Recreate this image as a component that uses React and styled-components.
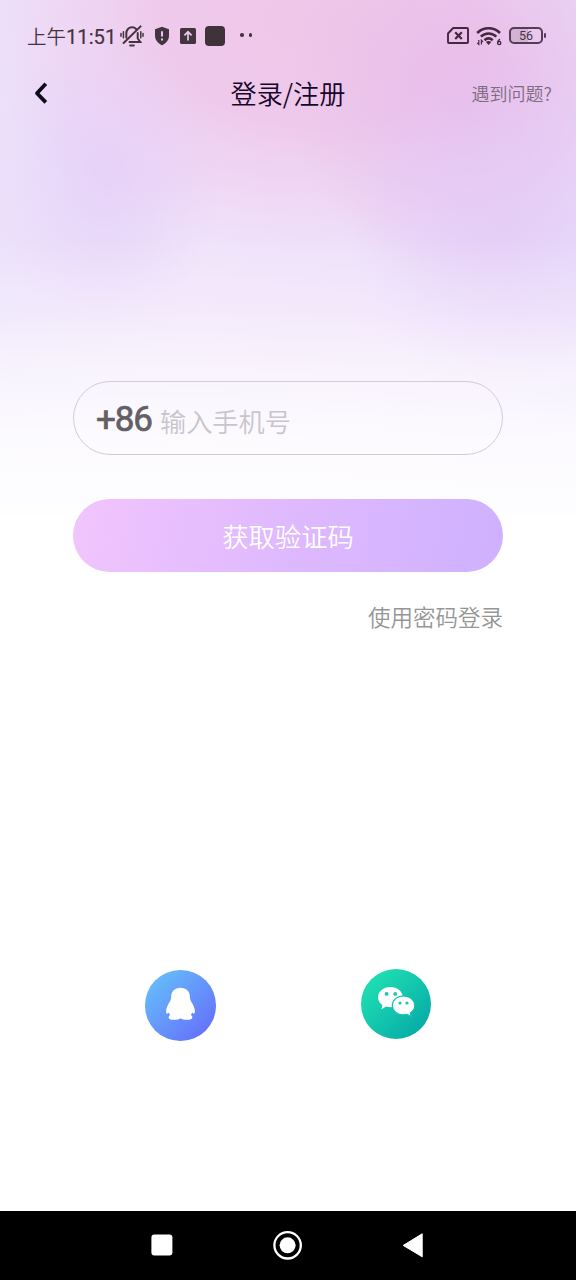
import React from 'react';
import styled, { createGlobalStyle } from 'styled-components';

const GlobalStyle = createGlobalStyle`
  * {
    box-sizing: border-box;
  }
  body {
    margin: 0;
    background: white;
    font-family: 'Noto Sans CJK SC', sans-serif;
    font-weight: 350;
  }
  svg {
    display: block;
    flex: none;
  }
`

const MutedBell = () => (
  <svg width='24' height='22' viewBox='0 0 24 22' fill='none' stroke='#44343f' strokeWidth='2' strokeLinecap='round'>
    <path d='M6.300 12.500V8.500C6.300 4.700 8.800 2.300 12 2.300c1.700 0 3.100.6 4.100 1.700M17.700 8v5.500l2.600 3.500H9.500M3.600 18 20.600 1.400' />
    <path d='M10.200 20.400h3.600' />
    <path d='M3.400 6.800v6M1 8.600v2.600M20.800 6.800v6M23 8.600v2.600' strokeWidth='1.500' />
  </svg>
)

const Shield = () => (
  <svg width='16' height='20' viewBox='0 0 16 20'>
    <path d='M8 .8 15 3.300v6.200c0 4.600-2.800 7.800-7 9.700-4.200-1.900-7-5.100-7-9.700V3.300z' fill='#44343f' />
    <path d='M8 5.200v5.400M8 12.600v2' stroke='#eac9ef' strokeWidth='2' />
  </svg>
)

const Upload = () => (
  <svg width='16' height='16' viewBox='0 0 16 16'>
    <rect width='16' height='16' rx='1.500' fill='#44343f' />
    <path d='M8 12.600V4M4.400 7.400 8 3.800l3.600 3.600' fill='none' stroke='#eac9ef' strokeWidth='1.700' />
  </svg>
)

const NoSim = () => (
  <svg width='22' height='17' viewBox='0 0 22 17' fill='none' stroke='#44283f' strokeWidth='1.900'>
    <path d='M6.200 1H20a1 1 0 0 1 1 1v13a1 1 0 0 1-1 1H2a1 1 0 0 1-1-1V6.500z' strokeLinejoin='round' />
    <path d='m8.200 5.200 6.600 6.800M14.800 5.200l-6.600 6.800' strokeWidth='2.200' />
  </svg>
)

const Wifi = () => (
  <svg width='26' height='20' viewBox='0 0 26 20' fill='none' stroke='#44283f' strokeWidth='2.600'>
    <path d='M1.200 7C7.600.7 17.600.7 24 7M4.900 10.700c4.300-4.300 11.100-4.300 15.400 0M8.500 14.200c2.500-2.300 5.700-2.300 8.200 0' />
    <path d='m9.900 16 2.700 3 2.700-3c-1.600-1.300-3.800-1.300-5.400 0z' fill='#44283f' stroke='none' />
    <path d='M2.800 14v4.400L1.200 16.800M5.400 18.600v-4.400L7 15.800' strokeWidth='1.200' />
    <path d='M24 13.200c-1.400.7-2.300 2-2.300 3.600' strokeWidth='1.400' />
    <circle cx='23.200' cy='17' r='1.600' strokeWidth='1.400' />
  </svg>
)

const QQ = () => (
  <svg width='30' height='34' viewBox='0 0 30 34' fill='white'>
    <path d='M15.500.8C9.800.8 6.300 4.600 6.100 10.200c0 1.700-.5 3-1.500 4.700C2.600 18 1.100 21.200 1.100 24.200c0 1.700.5 2.600 1.100 2.500.6-.1 1.100-.6 1.600-1.300.3 1 .7 1.800 1.300 2.500-1 .6-1.500 1.600-1.500 2.600 0 1.700 2 2.300 5.400 2.300 2.800 0 5.200-.5 6.500-1.500 1.300 1 3.700 1.500 6.500 1.500 3.400 0 5.400-.6 5.400-2.300 0-1-.5-2-1.500-2.600.6-.7 1-1.500 1.300-2.500.5.7 1 1.200 1.600 1.300.6.1 1.100-.8 1.100-2.500 0-3-1.500-6.200-3.500-9.300-1-1.700-1.500-3-1.500-4.700C25.100 4.600 21.200.8 15.500.8z' />
  </svg>
)

const WeChat = () => (
  <svg width='38' height='32' viewBox='0 0 38 32' fill='white'>
    <path d='M13.400 1C6.500 1 1 5.500 1 11.200c0 3.200 1.700 6 4.400 7.900L4.400 23.200l4.800-2.600c1.400.4 2.700.6 4.200.6 7 0 12.400-4.400 12.400-10S20.400 1 13.400 1z' />
    <path d='M26.500 9.900c-6.200 0-11.200 4.200-11.200 9.500s5 9.500 11.200 9.500c1.300 0 2.500-.2 3.600-.5l4.300 2.400-1.100-3.800c2.700-1.800 4.400-4.500 4.400-7.600 0-5.300-5-9.500-11.200-9.500z' stroke='#14c4ac' strokeWidth='1.200' />
    <g fill='#18c9ad'>
      <circle cx='9.600' cy='7.900' r='1.900' />
      <circle cx='18.200' cy='7.900' r='1.900' />
      <circle cx='23' cy='17' r='1.600' />
      <circle cx='30' cy='17' r='1.600' />
    </g>
  </svg>
)

const App = () => {
  return (
    <Page>
      <GlobalStyle />
      <StatusBar>
        <Time>上午<b>11:51</b></Time>
        <StatusIcons>
          <MutedBell />
          <Shield />
          <Upload />
          <AppBadge />
          <Dots><i /><i /></Dots>
        </StatusIcons>
        <Signals>
          <NoSim />
          <Wifi />
          <Battery><span>56</span></Battery>
        </Signals>
      </StatusBar>
      <Header>
        <svg width='16' height='24' viewBox='0 0 16 24' fill='none' stroke='#100c18' strokeWidth='3.800'>
          <path d='M13.800 2.800 5 12.200l8.800 9.200' strokeLinecap='butt' strokeLinejoin='round' />
        </svg>
        <Title>登录/注册</Title>
        <Help>遇到问题?</Help>
      </Header>
      <Form>
        <PhoneField>
          <Prefix>+86</Prefix>
          <Placeholder>输入手机号</Placeholder>
        </PhoneField>
        <Submit>获取验证码</Submit>
        <PasswordLink>使用密码登录</PasswordLink>
      </Form>
      <Socials>
        <Social $from='#65bdfb' $to='#6570fb' $drop='1.5px'><QQ /></Social>
        <Social $from='#20e1b2' $to='#06aaa8' $drop='0'><WeChat /></Social>
      </Socials>
      <NavBar>
        <svg width='22' height='22' viewBox='0 0 22 22'>
          <rect x='.4' y='.6' width='21' height='21' rx='3' fill='white' />
        </svg>
        <svg width='30' height='30' viewBox='0 0 30 30'>
          <circle cx='14.600' cy='15.300' r='13.200' fill='none' stroke='white' strokeWidth='2.300' />
          <circle cx='14.600' cy='15.300' r='8' fill='white' />
        </svg>
        <svg width='22' height='26' viewBox='0 0 22 26'>
          <path d='M20.200 1.800v23L1.200 13.400z' fill='white' stroke='white' strokeLinejoin='round' />
        </svg>
      </NavBar>
    </Page>
  )
}

const Page = styled.main`
  width: 576px;
  height: 1280px;
  display: flex;
  flex-direction: column;
  overflow: hidden;
  background:
    linear-gradient(to bottom, rgba(255, 255, 255, 0) 240px, rgba(255, 255, 255, 0.25) 310px, rgba(255, 255, 255, 0.6) 370px, rgba(255, 255, 255, 0.85) 440px, rgba(255, 255, 255, 0.93) 512px, white 514px),
    radial-gradient(ellipse 120px 150px at 105px 175px, rgba(228, 205, 247, 0.75), rgba(228, 206, 249, 0.4) 50%, rgba(228, 206, 249, 0)),
    radial-gradient(ellipse 150px 170px at 500px 225px, rgba(228, 204, 247, 0.75), rgba(227, 204, 249, 0.4) 50%, rgba(227, 204, 249, 0)),
    radial-gradient(ellipse 180px 190px at 470px 95px, rgba(231, 186, 233, 0.85), rgba(231, 190, 235, 0.55) 50%, rgba(230, 190, 236, 0)),
    radial-gradient(ellipse 340px 235px at 310px 20px, #eec6e8, rgba(239, 199, 234, 0.9) 45%, rgba(239, 206, 239, 0.7) 65%, rgba(239, 218, 246, 0)),
    linear-gradient(to right, #ece2fb, #f0e3fa 35%, #eee0fa 70%, #e9dcfa),
    white;
`

const StatusBar = styled.div`
  height: 70px;
  flex: none;
  display: flex;
  align-items: center;
  padding: 1px 30px 0 27px;
  color: #44343f;
`

const Time = styled.div`
  width: 93px;
  padding-top: 2px;
  font-size: 19.500px;
  line-height: 28px;
  white-space: nowrap;
  b {
    font-family: Roboto, sans-serif;
    font-size: 20.200px;
    font-weight: 400;
    -webkit-text-stroke: 0.2px #44343f;
  }
`

const StatusIcons = styled.div`
  display: flex;
  align-items: center;
  > :nth-child(2) {
    margin-left: 10px;
  }
  > :nth-child(3) {
    margin-left: 10px;
  }
`

const AppBadge = styled.span`
  width: 20px;
  height: 20px;
  margin-left: 9px;
  border-radius: 4px;
  background: #3f3239;
`

const Dots = styled.span`
  display: flex;
  gap: 5px;
  margin-left: 15px;
  padding-bottom: 1px;
  i {
    width: 3.500px;
    height: 3.500px;
    border-radius: 50%;
    background: #44343f;
  }
`

const Signals = styled.div`
  display: flex;
  align-items: center;
  gap: 7px;
  margin-left: auto;
`

const Battery = styled.div`
  position: relative;
  width: 34px;
  height: 17px;
  margin-right: 3px;
  border: 2px solid #553d57;
  border-radius: 5px;
  background: linear-gradient(to right, #d2b3d5 56%, transparent 56%);
  display: flex;
  align-items: center;
  justify-content: center;
  font: 400 12.500px Roboto, sans-serif;
  &::after {
    content: '';
    position: absolute;
    right: -5px;
    top: 4px;
    width: 2px;
    height: 5px;
    border-radius: 1px;
    background: #553d57;
  }
`

const Header = styled.header`
  height: 46px;
  flex: none;
  display: grid;
  grid-template-columns: 1fr auto 1fr;
  align-items: center;
  padding: 0 24px 0 32px;
`

const Title = styled.h1`
  margin: 0 8px 0 0;
  font-size: 26.200px;
  font-weight: 350;
  line-height: 38px;
  color: #160728;
`

const Help = styled.span`
  justify-self: end;
  font-size: 18px;
  line-height: 26px;
  color: #806b80;
`

const Form = styled.section`
  display: flex;
  flex-direction: column;
  margin: 265px 73px 0;
`

const PhoneField = styled.div`
  height: 74px;
  display: flex;
  align-items: center;
  padding-left: 22px;
  border: 1px solid #d3ccd7;
  border-radius: 37px;
`

const Prefix = styled.span`
  width: 64px;
  font: 400 35px Roboto, sans-serif;
  letter-spacing: -1.200px;
  -webkit-text-stroke: 0.700px #626065;
  color: #626065;
  padding-top: 3px;
`

const Placeholder = styled.span`
  font-size: 26.200px;
  line-height: 38px;
  padding-top: 6px;
  color: #c9c5cc;
`

const Submit = styled.button`
  height: 73px;
  margin-top: 44px;
  padding: 0;
  border: none;
  border-radius: 37px;
  background: linear-gradient(100deg, #f1c5fd, #dfb9fe 50%, #ceb1ff);
  color: white;
  font-family: inherit;
  font-size: 26.300px;
  font-weight: 350;
`

const PasswordLink = styled.span`
  align-self: flex-end;
  margin-top: 27px;
  font-size: 22.500px;
  line-height: 34px;
  color: #969696;
`

const Socials = styled.div`
  display: flex;
  justify-content: center;
  gap: 145px;
  margin-top: auto;
  margin-bottom: 170.500px;
`

const Social = styled.div`
  width: 70.500px;
  height: 70.500px;
  margin-top: ${({ $drop }) => $drop};
  border-radius: 50%;
  display: grid;
  place-items: center;
  background: linear-gradient(135deg, ${({ $from }) => $from} 10%, ${({ $to }) => $to} 90%);
  svg {
    margin-bottom: 3px;
  }
`

const NavBar = styled.nav`
  height: 69px;
  flex: none;
  display: flex;
  align-items: center;
  justify-content: space-between;
  padding: 0 152px 1px 151px;
  background: black;
`

export default App
